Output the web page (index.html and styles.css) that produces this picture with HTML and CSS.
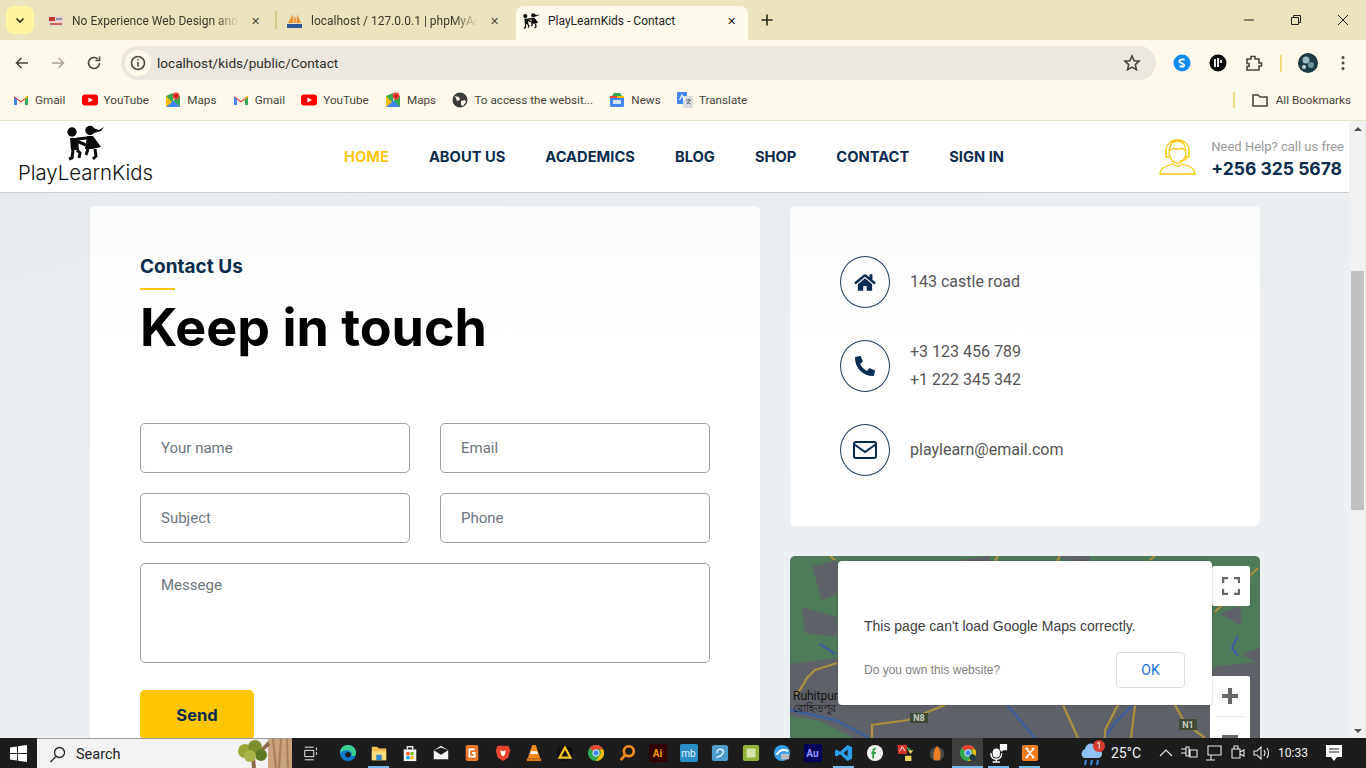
FILE: index.html
```html
<!DOCTYPE html>
<html lang="en">
<head>
    <meta charset="UTF-8">
    <title>PlayLearnKids - Contact</title>
    <link rel="stylesheet" href="styles.css">
</head>
<body>

<svg class="sprite" width="0" height="0">
    <symbol id="gmail" viewBox="0 0 16 16">
        <path d="M1 13V4l7 5 7-5v9h-3V7.500L8 10.500 4 7.500V13z" fill="#ea4335"/>
        <path d="M1 13h3V7.500L1 5z" fill="#4285f4"/>
        <path d="M12 13h3V5l-3 2.500z" fill="#34a853"/>
        <path d="M12 7.500L15 5V3.500L12 5.500z" fill="#fbbc04"/>
    </symbol>
    <symbol id="youtube" viewBox="0 0 16 16">
        <rect x="0" y="2.500" width="16" height="11" rx="3" fill="#f00"/>
        <path d="M6.400 5.500v5L11 8z" fill="#fff"/>
    </symbol>
    <symbol id="maps" viewBox="0 0 16 16">
        <path d="M1 4l7-3 7 3v11H1z" fill="#34a853"/>
        <path d="M1 15l7-7 7 7z" fill="#4285f4"/>
        <path d="M1 4l6 6-6 5z" fill="#fbbc04"/>
        <path d="M8 1l3 5-3 3z" fill="#e8eaed"/>
        <circle cx="11" cy="4" r="3.400" fill="#ea4335"/>
        <circle cx="11" cy="4" r="1.200" fill="#a50e0e"/>
    </symbol>
    <symbol id="kids" viewBox="0 0 38 36">
        <circle cx="5" cy="7" r="4.700" class="kid-fill"/>
        <circle cx="23" cy="5.500" r="4.700" class="kid-fill"/>
        <path d="M26 3l6 2 5-3-3 4-7 2z" class="kid-fill"/>
        <path d="M3 13h8l1 12H4z" class="kid-fill"/>
        <path d="M20 11h6l8 11-9 2-7 0z" class="kid-fill"/>
        <path d="M5 14l14 6M10 14l10-1" class="kid-line"/>
        <path d="M6 25l-1 8-3 1M10 25l3 3-1 5M21 24l-2 6M28 24l1 7-3 3" class="kid-line"/>
    </symbol>
</svg>

<div class="screen">

    <div class="tabstrip">
        <div class="tab-search">
            <svg width="12" height="12" viewBox="0 0 12 12"><path d="M2.500 4.500L6 8l3.500-3.500" class="ln-dark"/></svg>
        </div>
        <div class="tab tab-first">
            <svg class="favicon" viewBox="0 0 17 16">
                <rect x="1" y="3" width="15" height="10" fill="#e8d4cc"/>
                <rect x="2" y="4" width="6" height="4" fill="#c0392b"/>
                <rect x="9" y="5" width="6" height="2" fill="#8a8fb0"/>
                <rect x="3" y="10" width="12" height="2" fill="#c96a5c"/>
            </svg>
            <span class="tab-title fade">No Experience Web Design and</span>
            <span class="tab-close">&#10005;</span>
        </div>
        <div class="tab-sep"></div>
        <div class="tab tab-second">
            <svg class="favicon" viewBox="0 0 17 16">
                <path d="M2 10L7 1l2 5 2-5 4 9z" fill="#e8912d"/>
                <path d="M7 1l1 9M11 1l-1 9" stroke="#fff" stroke-width=".6"/>
                <rect x="1" y="11" width="15" height="4" fill="#2d5a96"/>
            </svg>
            <span class="tab-title fade">localhost / 127.0.0.1 | phpMyAd</span>
            <span class="tab-close">&#10005;</span>
        </div>
        <div class="tab tab-active">
            <svg class="favicon"><use href="#kids"/></svg>
            <span class="tab-title">PlayLearnKids - Contact</span>
            <span class="tab-close tab-close-on">&#10005;</span>
        </div>
        <svg class="new-tab" width="14" height="14" viewBox="0 0 14 14"><path d="M7 1.500v11M1.500 7h11" class="ln-dark"/></svg>
        <div class="window-btns">
            <svg width="12" height="12" viewBox="0 0 12 12"><path d="M1 6h10" class="ln-thin"/></svg>
            <svg width="12" height="12" viewBox="0 0 12 12"><path d="M1.500 3.500h7v7h-7zM3.500 3.500v-2h7v7h-2" class="ln-thin"/></svg>
            <svg width="12" height="12" viewBox="0 0 12 12"><path d="M1 1l10 10M11 1L1 11" class="ln-thin"/></svg>
        </div>
    </div>

    <div class="toolbar">
        <svg class="tool-icon" viewBox="0 0 16 16"><path d="M14 8H2.500M7.500 3L2.500 8l5 5" class="ln-tool"/></svg>
        <svg class="tool-icon tool-off" viewBox="0 0 16 16"><path d="M2 8h11.500M8.500 3l5 5-5 5" class="ln-tool"/></svg>
        <svg class="tool-icon" viewBox="0 0 16 16"><path d="M13.500 8A5.500 5.500 0 1 1 11.700 3.900M13.500 1.500v4h-4" class="ln-tool"/></svg>
        <div class="omnibox">
            <span class="site-info">
                <svg width="16" height="16" viewBox="0 0 16 16">
                    <circle cx="8" cy="8" r="6.500" class="ln-tool"/>
                    <path d="M8 7v4.500M8 4.200v1.400" class="ln-tool"/>
                </svg>
            </span>
            <span class="url">localhost/kids/public/Contact</span>
            <svg class="star" width="18" height="18" viewBox="0 0 18 18"><path d="M9 2l2.100 4.700 5 .5-3.800 3.400 1.100 5L9 13.100l-4.400 2.500 1.100-5L1.900 7.200l5-.5z" class="ln-tool"/></svg>
        </div>
        <div class="extensions">
            <svg width="18" height="18" viewBox="0 0 18 18">
                <circle cx="9" cy="9" r="8.500" fill="#0d8bf5"/>
                <path d="M11.500 5.500L8 5.500Q6 6 6.500 8L11 10.500Q11.500 12.500 10 12.500L6.500 12.500" fill="none" stroke="#fff" stroke-width="1.800"/>
            </svg>
            <svg width="18" height="18" viewBox="0 0 18 18">
                <circle cx="9" cy="9" r="8.500" fill="#0a0a0a"/>
                <path d="M6 5v8M9 4v9M12 6v3" stroke="#fff" stroke-width="1.800"/>
            </svg>
            <svg width="18" height="18" viewBox="0 0 18 18"><path d="M2 5h4V2.500h4V5h4v4h2.500v3H14v4H2v-3.500h2v-3H2z" class="ln-tool"/></svg>
            <span class="ext-sep"></span>
            <svg class="avatar" width="20" height="20" viewBox="0 0 20 20">
                <circle cx="10" cy="10" r="10" fill="#1e3a44"/>
                <circle cx="8" cy="7" r="3.500" fill="#9dbcc2"/>
                <circle cx="13" cy="12" r="3" fill="#6d949c"/>
                <circle cx="6" cy="14" r="2" fill="#c5d7d9"/>
            </svg>
            <svg width="4" height="16" viewBox="0 0 4 16"><g class="dot-fill"><circle cx="2" cy="2.500" r="1.500"/><circle cx="2" cy="8" r="1.500"/><circle cx="2" cy="13.500" r="1.500"/></g></svg>
        </div>
    </div>

    <div class="bookmarks">
        <a class="bm"><svg class="bm-ico"><use href="#gmail"/></svg>Gmail</a>
        <a class="bm"><svg class="bm-ico"><use href="#youtube"/></svg>YouTube</a>
        <a class="bm"><svg class="bm-ico"><use href="#maps"/></svg>Maps</a>
        <a class="bm"><svg class="bm-ico"><use href="#gmail"/></svg>Gmail</a>
        <a class="bm"><svg class="bm-ico"><use href="#youtube"/></svg>YouTube</a>
        <a class="bm"><svg class="bm-ico"><use href="#maps"/></svg>Maps</a>
        <a class="bm">
            <svg class="bm-ico" viewBox="0 0 16 16">
                <circle cx="8" cy="8" r="7.500" fill="#3c3c3c"/>
                <path d="M3 4l4 1 1 3-3 1zM9 9l4-1 1 2-3 4-2-1z" fill="#fff9ec"/>
            </svg>To access the websit...</a>
        <a class="bm">
            <svg class="bm-ico" viewBox="0 0 16 16">
                <rect x="1" y="4" width="14" height="11" rx="1.500" fill="#4285f4"/>
                <path d="M3 4l2-3h6l2 3z" fill="#34a853"/>
                <path d="M1 4h7v2H1z" fill="#ea4335"/>
                <path d="M8 4h7v2H8z" fill="#fbbc04"/>
                <rect x="4" y="8" width="8" height="4" fill="#d2e3fc"/>
            </svg>News</a>
        <a class="bm">
            <svg class="bm-ico" viewBox="0 0 16 16">
                <rect x="0" y="0" width="10" height="12" rx="1" fill="#4285f4"/>
                <rect x="6" y="4" width="10" height="12" rx="1" fill="#dadce0"/>
                <path d="M2.500 8l2.500-5 2.500 5" fill="none" stroke="#fff" stroke-width="1.200"/>
                <path d="M9 8h5M11.500 7v1M13 8q-1 3-3.500 4M10 9.500q1.500 2 3.500 2.500" fill="none" stroke="#5f6368"/>
            </svg>Translate</a>
        <span class="bm-sep"></span>
        <a class="bm bm-all">
            <svg class="bm-ico" viewBox="0 0 16 16"><path d="M1 3h5l2 2h7v9H1z" class="ln-tool"/></svg>All Bookmarks</a>
    </div>

    <div class="viewport">
        <div class="page">

            <header class="site-header">
                <a class="logo">
                    <svg width="38" height="36"><use href="#kids"/></svg>
                    <span class="logo-text">PlayLearnKids</span>
                </a>
                <nav class="main-nav">
                    <a class="active">HOME</a>
                    <a>ABOUT US</a>
                    <a>ACADEMICS</a>
                    <a>BLOG</a>
                    <a>SHOP</a>
                    <a>CONTACT</a>
                    <a>SIGN IN</a>
                </nav>
                <div class="help">
                    <svg width="37" height="36" viewBox="0 0 37 36">
                        <g class="ln-yellow">
                            <path d="M10 14c0-7 3-12 8.500-12S27 7 27 14c0 5-4 10-8.500 10S10 19 10 14z"/>
                            <path d="M10 12c3-3 6-3 8.500-1.500 3-1.500 6-1.500 8.500 1.500"/>
                            <path d="M7 16V12C7 5 12 1 18.500 1S30 5 30 12v4"/>
                            <path d="M7 12v6h3M30 12v6h-3M28 18c0 2-3 4-7 4"/>
                            <path d="M1 35c0-6 6-8 13-10 2 3 7 3 9 0 7 2 13 4 13 10z"/>
                        </g>
                    </svg>
                    <div class="help-text">
                        <span class="help-label">Need Help? call us free</span>
                        <strong class="help-phone">+256 325 5678</strong>
                    </div>
                </div>
            </header>

            <main class="content">
                <section class="card form-card">
                    <h4 class="eyebrow">Contact Us</h4>
                    <h1 class="title">Keep in touch</h1>
                    <form class="contact-form">
                        <input type="text" placeholder="Your name">
                        <input type="text" placeholder="Email">
                        <input type="text" placeholder="Subject">
                        <input type="text" placeholder="Phone">
                        <textarea class="wide" placeholder="Messege"></textarea>
                        <button type="button" class="send">Send</button>
                    </form>
                </section>

                <aside class="side">
                    <section class="card info-card">
                        <div class="info-row">
                            <span class="info-icon">
                                <svg width="22" height="19" viewBox="0 0 576 512"><path class="navy-fill" d="M280.37 148.26L96 300.11V464a16 16 0 0 0 16 16l112.06-.29a16 16 0 0 0 15.92-16V368a16 16 0 0 1 16-16h64a16 16 0 0 1 16 16v95.64a16 16 0 0 0 16 16.05L464 480a16 16 0 0 0 16-16V300L295.67 148.26a12.19 12.19 0 0 0-15.3 0zM571.6 251.47L488 182.56V44.05a12 12 0 0 0-12-12h-56a12 12 0 0 0-12 12v72.61L318.47 43a48 48 0 0 0-61 0L4.34 251.47a12 12 0 0 0-1.6 16.9l25.5 31A12 12 0 0 0 45.15 301l235.22-193.74a12.19 12.19 0 0 1 15.3 0L530.9 301a12 12 0 0 0 16.9-1.6l25.5-31a12 12 0 0 0-1.7-16.93z"/></svg>
                            </span>
                            <div class="info-text"><p>143 castle road</p></div>
                        </div>
                        <div class="info-row">
                            <span class="info-icon">
                                <svg width="20" height="20" viewBox="0 0 512 512"><path class="navy-fill" transform="translate(512 0) scale(-1 1)" d="M493.4 24.6l-104-24c-11.3-2.6-22.9 3.3-27.5 13.9l-48 112c-4.2 9.8-1.4 21.3 6.9 28l60.6 49.6c-36 76.7-98.9 140.5-177.2 177.2l-49.6-60.6c-6.8-8.3-18.2-11.1-28-6.9l-112 48C3.9 366.5-2 378.1.6 389.4l24 104C27.1 504.2 36.7 512 48 512c256.1 0 464-207.5 464-464 0-11.2-7.7-20.9-18.6-23.4z"/></svg>
                            </span>
                            <div class="info-text"><p>+3 123 456 789</p><p>+1 222 345 342</p></div>
                        </div>
                        <div class="info-row">
                            <span class="info-icon">
                                <svg width="24" height="18" viewBox="0 0 24 18"><rect x="1" y="1" width="22" height="16" rx="2" class="ln-navy"/><path d="M1.500 3.500L12 11l10.500-7.500" class="ln-navy"/></svg>
                            </span>
                            <div class="info-text"><p>playlearn@email.com</p></div>
                        </div>
                    </section>

                    <section class="map">
                        <svg class="map-art" width="470" height="400" viewBox="0 0 470 400">
                            <rect width="470" height="400" fill="#4f7a59"/>
                            <g fill="#5f6168">
                                <path d="M22 11L47 4v34L32 44z"/>
                                <path d="M12 51l35 10v20L15 77z"/>
                                <path d="M0 108l47-6 60 44h160l120-6 40-30 43-4v290H0z"/>
                                <path d="M452 98l18-6v18zM430 58l20-8 2 20z"/>
                                <path d="M170 4l30-4v10zM260 0h40v8z"/>
                            </g>
                            <path d="M0 160l30 5 34 17H0z" fill="#4f7a59"/>
                            <g class="map-river">
                                <path d="M0 154l45 10 33 17"/>
                                <path d="M217 149l28 33"/>
                                <path d="M342 150l-17 17-10 15"/>
                                <path d="M30 88l15 10M448 80l-6 12 6 8"/>
                            </g>
                            <g class="map-road">
                                <path d="M47 107L25 114l-8 8-7 12-5 4"/>
                                <path d="M82 182v-13l36-5 37-15"/>
                                <path d="M273 149l15 33"/>
                                <path d="M328 149l-13 25v8"/>
                                <path d="M345 150l-4 32"/>
                                <path d="M385 149l10 18 20 15"/>
                                <path d="M468 12l-14 13M437 44l-12 12"/>
                                <path d="M45 4L40 0M208 0l-3 5M270 0l-3 5M360 4l5-4"/>
                            </g>
                            <rect x="120" y="157" width="18" height="10" fill="#3d4a36"/>
                            <rect x="389" y="163" width="18" height="11" fill="#3d4a36"/>
                            <text x="129" y="165" class="shield">N8</text>
                            <text x="398" y="172" class="shield">N1</text>
                            <text x="3" y="144" class="place">Ruhitpur</text>
                            <text x="3" y="156" class="place place-bn">রোহিতপুর</text>
                        </svg>
                        <button type="button" class="map-btn full-btn">
                            <svg width="18" height="18" viewBox="0 0 18 18"><path d="M1 6V1h5M12 1h5v5M17 12v5h-5M6 17H1v-5" class="ln-map"/></svg>
                        </button>
                        <div class="map-btn zoom-btns">
                            <svg width="18" height="18" viewBox="0 0 18 18"><path d="M9 1v16M1 9h16" class="ln-map-thick"/></svg>
                            <span class="zoom-line"></span>
                            <svg width="18" height="18" viewBox="0 0 18 18"><path d="M1 9h16" class="ln-map-thick"/></svg>
                        </div>
                        <div class="map-dialog">
                            <p class="map-msg">This page can't load Google Maps correctly.</p>
                            <div class="map-foot">
                                <a class="map-own">Do you own this website?</a>
                                <button type="button" class="map-ok">OK</button>
                            </div>
                        </div>
                    </section>
                </aside>
            </main>
        </div>

        <div class="scrollbar">
            <span class="arrow arrow-up"></span>
            <span class="thumb"></span>
            <span class="arrow arrow-down"></span>
        </div>
    </div>

    <footer class="taskbar">
        <div class="start">
            <svg width="17" height="17" viewBox="0 0 17 17"><path d="M0 2.400l7-1v6.600H0zM8 1.300l9-1.300v8H8zM0 9h7v6.600l-7-1zM8 9h9v8l-9-1.300z" fill="#fff"/></svg>
        </div>
        <div class="searchbox">
            <svg width="17" height="17" viewBox="0 0 17 17"><circle cx="10.500" cy="6.500" r="5" class="ln-search"/><path d="M7 10.500L1.500 16" class="ln-search"/></svg>
            <span>Search</span>
            <svg class="tree" width="57" height="30" viewBox="0 0 57 30">
                <rect x="33" y="0" width="24" height="30" fill="#c9a27e"/>
                <path d="M38 0l3 30M46 0l-2 30M52 0l1 30" stroke="#a97f5a" stroke-width="2"/>
                <path d="M33 2L22 14l3 1 10-9zM16 18l1 12h4l-1-12z" fill="#8a6a48"/>
                <circle cx="10" cy="12" r="7" fill="#9aa83a"/>
                <circle cx="20" cy="8" r="7" fill="#7c8f2c"/>
                <circle cx="26" cy="16" r="6" fill="#5f7a24"/>
                <circle cx="15" cy="17" r="6" fill="#a8b548"/>
            </svg>
        </div>
        <div class="task-apps">
            <span class="app app-view">
                <svg width="17" height="17" viewBox="0 0 17 17"><path d="M1 5h10v7H1zM1 1.500h10M1 15.500h10M14 2v3M14 7v3" stroke="#fff" fill="none"/></svg>
            </span>
            <span class="app">
                <svg width="20" height="20" viewBox="0 0 20 20"><circle cx="10" cy="10" r="9" fill="#0f7cc9"/><path d="M1 10a9 9 0 0 1 18 0c0 3-3 4-5 3 1-4-2-6-5-6-4 0-7 2-8 3z" fill="#3fcf8e"/><circle cx="10" cy="12" r="3" fill="#1b1b1b"/></svg>
            </span>
            <span class="app app-running">
                <svg width="20" height="20" viewBox="0 0 20 20"><path d="M2 3h6l2 2h8v13H2z" fill="#f2c14e"/><path d="M2 8h16v10H2z" fill="#fadb7d"/><rect x="7" y="12" width="6" height="6" fill="#2f88d0"/></svg>
            </span>
            <span class="app">
                <svg width="20" height="20" viewBox="0 0 20 20"><path d="M3 6h14v13H3z" fill="#f2f2f2"/><path d="M7 6V3h6v3" fill="none" stroke="#f2f2f2" stroke-width="1.500"/><rect x="6" y="9" width="3.500" height="3.500" fill="#f25022"/><rect x="10.500" y="9" width="3.500" height="3.500" fill="#7fba00"/><rect x="6" y="13.500" width="3.500" height="3.500" fill="#00a4ef"/><rect x="10.500" y="13.500" width="3.500" height="3.500" fill="#ffb900"/></svg>
            </span>
            <span class="app">
                <svg width="20" height="20" viewBox="0 0 20 20"><path d="M2 7l8-5 8 5v10H2z" fill="#f4f4f4"/><path d="M2 7l8 5 8-5-8-3z" fill="#1a1a1a"/></svg>
            </span>
            <span class="app">
                <svg width="20" height="20" viewBox="0 0 20 20"><rect x="3" y="1" width="14" height="18" rx="2" fill="#e9762b"/><path d="M13 6H7v8h6v-4h-3" fill="none" stroke="#fff" stroke-width="2"/></svg>
            </span>
            <span class="app">
                <svg width="20" height="20" viewBox="0 0 20 20"><path d="M4 2h12l2 5-2 8-6 4-6-4-2-8z" fill="#e8452c"/><path d="M7 7l3 1 3-1-1 5-2 2-2-2z" fill="#fff"/></svg>
            </span>
            <span class="app">
                <svg width="20" height="20" viewBox="0 0 20 20"><path d="M8 1h4l5 15H3z" fill="#f08a1d"/><path d="M6.500 8h7l.8 3H5.700z" fill="#fff"/><rect x="2" y="16" width="16" height="3" fill="#d9761a"/></svg>
            </span>
            <span class="app">
                <svg width="20" height="20" viewBox="0 0 20 20"><circle cx="10" cy="10" r="9" fill="#111"/><path d="M10 4l6 11H4z" fill="none" stroke="#f3c221" stroke-width="2.500"/></svg>
            </span>
            <span class="app">
                <svg width="20" height="20" viewBox="0 0 20 20"><circle cx="10" cy="10" r="9" fill="#34a853"/><path d="M10 1a9 9 0 0 1 8 5H10a4 4 0 0 0-3.500 2L3 4a9 9 0 0 1 7-3z" fill="#ea4335"/><path d="M18 6a9 9 0 0 1-8 13l3.500-6a4 4 0 0 0 0-7z" fill="#fbbc04"/><circle cx="10" cy="10" r="3.500" fill="#4285f4" stroke="#fff"/></svg>
            </span>
            <span class="app">
                <svg width="20" height="20" viewBox="0 0 20 20"><circle cx="12" cy="8" r="5.500" fill="none" stroke="#f08a1d" stroke-width="3"/><path d="M8 12l-5 6" stroke="#f08a1d" stroke-width="3"/></svg>
            </span>
            <span class="app">
                <span class="app-tile tile-ai">Ai</span>
            </span>
            <span class="app">
                <span class="app-tile tile-mb">mb</span>
            </span>
            <span class="app">
                <svg width="20" height="20" viewBox="0 0 20 20"><rect x="1" y="1" width="18" height="18" rx="3" fill="#4c9ccd"/><path d="M6 15q6-1 8-6-1-4-5-3-3 1-2 4" fill="none" stroke="#e8f3fa" stroke-width="1.500"/></svg>
            </span>
            <span class="app">
                <svg width="20" height="20" viewBox="0 0 20 20"><rect x="1" y="1" width="18" height="18" rx="2" fill="#8fb339"/><rect x="5" y="5" width="10" height="10" fill="#d6e4a8"/></svg>
            </span>
            <span class="app">
                <svg width="20" height="20" viewBox="0 0 20 20"><circle cx="10" cy="10" r="9" fill="#3aa0e8"/><path d="M4 12q5-8 13-4" fill="none" stroke="#fff" stroke-width="2"/><rect x="9" y="11" width="9" height="6" fill="#bdbdbd"/></svg>
            </span>
            <span class="app">
                <span class="app-tile tile-au">Au</span>
            </span>
            <span class="app app-running">
                <svg width="20" height="20" viewBox="0 0 20 20"><path d="M14 1l5 2.500v13L14 19 5.500 11.500 2 14l-2-1V7l2-1 3.500 2.500zM14 6l-4.500 4 4.500 4z" fill="#2b9fe6"/></svg>
            </span>
            <span class="app">
                <svg width="20" height="20" viewBox="0 0 20 20"><circle cx="10" cy="10" r="9" fill="#f2f2f2"/><path d="M11 5q-3 0-3 3v8M6 10h5" fill="none" stroke="#2f9e44" stroke-width="2"/></svg>
            </span>
            <span class="app">
                <svg width="20" height="20" viewBox="0 0 20 20"><rect x="1" y="1" width="10" height="10" fill="#d9342b"/><path d="M3 8l3-5 3 5" fill="none" stroke="#fff"/><path d="M12 7h6l-3 4zM9 13h7v6H9z" fill="#f4d35e"/><path d="M11 4l4 3" stroke="#3aa655" stroke-width="2"/></svg>
            </span>
            <span class="app">
                <svg width="20" height="20" viewBox="0 0 20 20"><circle cx="10" cy="11" r="8" fill="#4a4a4a"/><path d="M10 2q6 6 3 16H7Q4 10 10 2z" fill="#ee7f22"/></svg>
            </span>
            <span class="app app-active">
                <svg width="20" height="20" viewBox="0 0 20 20"><circle cx="10" cy="10" r="9" fill="#34a853"/><path d="M10 1a9 9 0 0 1 8 5H10a4 4 0 0 0-3.500 2L3 4a9 9 0 0 1 7-3z" fill="#ea4335"/><path d="M18 6a9 9 0 0 1-8 13l3.500-6a4 4 0 0 0 0-7z" fill="#fbbc04"/><circle cx="10" cy="10" r="3.500" fill="#4285f4" stroke="#fff"/><circle cx="15" cy="15" r="3.500" fill="#1e3a44"/></svg>
            </span>
            <span class="app app-running">
                <svg width="20" height="22" viewBox="0 0 20 22"><rect x="3" y="6" width="8" height="10" rx="4" fill="#fff"/><path d="M1 11q0 7 6 7t6-7M7 18v3M3 21h8" fill="none" stroke="#fff" stroke-width="1.500"/><path d="M11 1h8v7h-4l-3 2V8h-1z" fill="#fff"/></svg>
            </span>
            <span class="app app-running">
                <svg width="20" height="20" viewBox="0 0 20 20"><rect x="1" y="1" width="18" height="18" rx="2" fill="#f07e21"/><path d="M6 5l8 10M14 5L6 15M5 5h3M12 5h3M5 15h3M12 15h3" stroke="#fff" stroke-width="1.800"/></svg>
            </span>
        </div>
        <div class="tray">
            <span class="weather">
                <svg width="28" height="26" viewBox="0 0 28 26">
                    <path d="M6 18a5 5 0 0 1 1-9 6 6 0 0 1 12 1 4 4 0 0 1 2 8z" fill="#8fc1f2"/>
                    <path d="M8 20l-1 5M14 20l-1 5M20 20l-1 5" stroke="#3d8fe0" stroke-width="2"/>
                    <circle cx="21" cy="6" r="6" fill="#d93a30"/>
                    <text x="21" y="9" class="badge-num">1</text>
                </svg>
                <span>25°C</span>
            </span>
            <svg class="tray-chev" width="14" height="8" viewBox="0 0 14 8"><path d="M1 7l6-6 6 6" class="ln-tray"/></svg>
            <svg width="18" height="16" viewBox="0 0 18 16"><path d="M1 4h5M1 8h5M6 2h3v9H6zM10 5h7v7h-7z" class="ln-tray"/></svg>
            <svg width="18" height="18" viewBox="0 0 18 18"><path d="M3 2h13v9H3zM1 16h9M6 11v5" class="ln-tray"/></svg>
            <svg width="16" height="18" viewBox="0 0 16 18"><path d="M2 5h8v9H2zM4 5V2h4v3M10 8l4-2v6l-4-2" class="ln-tray"/></svg>
            <svg width="18" height="16" viewBox="0 0 18 16"><path d="M1 6h3l4-4v12l-4-4H1zM11 5q2 3 0 6M14 3q3 5 0 10" class="ln-tray"/></svg>
            <span class="clock">10:33</span>
            <svg class="notify" width="18" height="18" viewBox="0 0 18 18"><path d="M1 1h16v12h-5l-3 4-3-4H1z" fill="#fff"/><path d="M4 5h10M4 8h10" stroke="#1c1c1c"/></svg>
        </div>
    </footer>
</div>

</body>
</html>
```

FILE: styles.css
```css
* {
    margin: 0;
    padding: 0;
    box-sizing: border-box;
}

body {
    font-family: "Roboto", "Liberation Sans", sans-serif;
    background: #1c1c1c;
}

a {
    text-decoration: none;
    color: inherit;
}

.sprite {
    display: block;
    height: 0;
}

.screen {
    width: 1366px;
    height: 768px;
    display: flex;
    flex-direction: column;
    overflow: hidden;
}

/* svg line styles */
.ln-dark { fill: none; stroke: #2b2b20; stroke-width: 1.6; }
.ln-thin { fill: none; stroke: #222; stroke-width: 1; }
.ln-tool { fill: none; stroke: #47453c; stroke-width: 1.6; }
.ln-yellow { fill: none; stroke: #fcc60d; stroke-width: 1.3; }
.ln-navy { fill: none; stroke: #062c52; stroke-width: 2; }
.ln-map { fill: none; stroke: #666; stroke-width: 2.4; }
.ln-map-thick { fill: none; stroke: #666; stroke-width: 4; }
.ln-search { fill: none; stroke: #222; stroke-width: 1.3; }
.ln-tray { fill: none; stroke: #e8e8e8; stroke-width: 1.1; }
.kid-fill { fill: #0b0b0b; }
.kid-line { fill: none; stroke: #0b0b0b; stroke-width: 3; }
.navy-fill { fill: #062c52; }
.dot-fill { fill: #47453c; }

/* tab strip */
.tabstrip {
    height: 40px;
    background: #ebe3bd;
    display: flex;
    align-items: flex-end;
    font-size: 12px;
    color: #3a382c;
}

.tab-search {
    width: 28px;
    height: 28px;
    margin: 0 4px 6px 6px;
    border-radius: 8px;
    background: #fdf59c;
    display: flex;
    align-items: center;
    justify-content: center;
}

.tab {
    height: 34px;
    padding-bottom: 4px;
    display: flex;
    align-items: center;
    flex: none;
}

.tab-first {
    width: 237px;
    padding-left: 9px;
}

.tab-second {
    width: 239px;
    padding-left: 9px;
}

.tab-sep {
    width: 2px;
    height: 18px;
    background: #d2c78a;
    margin-bottom: 11px;
    flex: none;
}

.tab-active {
    width: 232px;
    padding-left: 7px;
    background: #fff9ec;
    border-radius: 8px 8px 0 0;
    color: #222;
}

.favicon {
    width: 17px;
    height: 16px;
    flex: none;
    margin-right: 8px;
}

.tab-title {
    width: 167px;
    white-space: nowrap;
    flex: none;
}

.fade {
    -webkit-mask-image: linear-gradient(90deg, #000 85%, transparent);
    mask-image: linear-gradient(90deg, #000 85%, transparent);
}

.tab-close {
    margin-left: 12px;
    font-size: 11px;
    color: #4d4b3c;
}

.tab-close-on {
    color: #222;
    margin-left: 12px;
}

.new-tab {
    margin: 0 0 13px 12px;
}

.window-btns {
    margin-left: auto;
    align-self: center;
    display: flex;
    gap: 35px;
    padding-right: 17px;
}

/* toolbar */
.toolbar {
    height: 46px;
    background: #fff9ec;
    display: flex;
    align-items: center;
    padding-left: 14px;
}

.tool-icon {
    width: 16px;
    height: 16px;
    margin-right: 20px;
    flex: none;
}

.tool-off {
    opacity: 0.45;
}

.omnibox {
    width: 1035px;
    height: 34px;
    margin-left: -1px;
    border-radius: 17px;
    background: #ece8e0;
    display: flex;
    align-items: center;
    padding-left: 4px;
}

.site-info {
    width: 26px;
    height: 26px;
    border-radius: 50%;
    background: #fff9ec;
    display: flex;
    align-items: center;
    justify-content: center;
}

.url {
    margin-left: 6px;
    font-size: 13.6px;
    color: #2f2e28;
}

.star {
    margin-left: auto;
    margin-right: 15px;
}

.extensions {
    display: flex;
    align-items: center;
    margin-left: 17px;
    gap: 18px;
}

.ext-sep {
    width: 2px;
    height: 17px;
    background: #f0dc82;
    margin: 0 -2px 0 -1px;
}

.avatar {
    margin-right: 5px;
}

/* bookmarks */
.bookmarks {
    height: 35px;
    padding: 0 0 7px 13px;
    background: #fff9ec;
    border-bottom: 1px solid #ebe3bd;
    display: flex;
    align-items: center;
    gap: 16.3px;
    font-size: 11.7px;
    color: #45433a;
}

.bm {
    display: flex;
    align-items: center;
    gap: 6px;
    white-space: nowrap;
}

.bm-ico {
    width: 16px;
    height: 16px;
    flex: none;
}

.bm-sep {
    width: 2px;
    height: 16px;
    background: #f0dc82;
    margin-left: auto;
}

.bm-all {
    gap: 8px;
    padding-right: 15px;
}

/* page */
.viewport {
    flex: 1;
    min-height: 0;
    display: flex;
}

.page {
    flex: 1;
    overflow: hidden;
    background: #e9edf0;
    background-image: linear-gradient(165deg, #e6eaed, #ecf0f3 60%);
}

.scrollbar {
    width: 17px;
    background: #f1f1f1;
    display: flex;
    flex-direction: column;
    align-items: center;
    padding: 6px 0 5px;
}

.thumb {
    width: 13px;
    height: 239px;
    margin-top: 140px;
    background: #c1c1c1;
}

.arrow {
    width: 0;
    height: 0;
    border-left: 4px solid transparent;
    border-right: 4px solid transparent;
}

.arrow-up {
    border-bottom: 4px solid #505050;
}

.arrow-down {
    margin-top: auto;
    border-top: 4px solid #505050;
}

/* site header */
.site-header {
    height: 72px;
    background: #fff;
    border-bottom: 1px solid #ccc;
    display: flex;
    align-items: center;
    padding-left: 18px;
}

.logo {
    width: 135px;
    display: flex;
    flex-direction: column;
    align-items: center;
    align-self: flex-start;
    padding-top: 4px;
}

.logo-text {
    font-family: "Inter", "Liberation Sans", sans-serif;
    font-size: 20.4px;
    font-weight: 300;
    line-height: 24px;
    color: #111;
    white-space: nowrap;
}

.main-nav {
    display: flex;
    gap: 40px;
    margin-left: 191px;
    font-family: "Inter", "Liberation Sans", sans-serif;
    font-size: 14.7px;
    font-weight: 700;
    color: #0b2c4d;
}

.main-nav .active {
    color: #fcc60d;
}

.help {
    margin-left: auto;
    display: flex;
    align-items: center;
    gap: 15px;
    padding-right: 5px;
}

.help-text {
    display: flex;
    flex-direction: column;
    padding-top: 4px;
}

.help-label {
    font-size: 13px;
    line-height: 20px;
    color: #999;
    white-space: nowrap;
}

.help-phone {
    font-family: "Inter", "Liberation Sans", sans-serif;
    font-size: 17.5px;
    font-weight: 700;
    line-height: 24px;
    color: #0b2c4d;
    white-space: nowrap;
}

/* content */
.content {
    display: flex;
    align-items: flex-start;
    gap: 30px;
    padding: 13px 0 0 90px;
}

.card {
    background: linear-gradient(#fafbfb, #fff 130px);
    border-radius: 5px;
    padding: 50px;
}

.form-card {
    width: 670px;
    height: 760px;
}

.eyebrow {
    font-family: "Inter", "Liberation Sans", sans-serif;
    font-size: 19px;
    font-weight: 700;
    line-height: 20px;
    padding-top: 1px;
    color: #0b2c4d;
}

.eyebrow::after {
    content: "";
    display: block;
    width: 35px;
    height: 2px;
    margin-top: 11px;
    background: #fcc60d;
}

.title {
    font-family: "Inter", "Liberation Sans", sans-serif;
    font-size: 52px;
    font-weight: 700;
    line-height: 60px;
    margin-top: 8px;
    color: #000;
}

.contact-form {
    display: grid;
    grid-template-columns: 270px 270px;
    gap: 20px 30px;
    margin-top: 65px;
}

.contact-form input,
.contact-form textarea {
    height: 50px;
    border: 1px solid #a0a0a0;
    border-radius: 5px;
    padding: 0 20px;
    font-family: "Roboto", "Liberation Sans", sans-serif;
    font-size: 15px;
    background: #fff;
    outline: none;
    resize: none;
}

.contact-form .wide {
    grid-column: 1 / span 2;
    height: 100px;
    padding-top: 12px;
}

.contact-form ::placeholder {
    color: #6c757d;
    opacity: 1;
}

.send {
    width: 114px;
    height: 50px;
    margin-top: 7px;
    border: 0;
    border-radius: 5px;
    background: #fec601;
    font-family: "Inter", "Liberation Sans", sans-serif;
    font-size: 16.5px;
    font-weight: 700;
    color: #0b2c4d;
}

/* right column */
.side {
    width: 470px;
    display: flex;
    flex-direction: column;
    gap: 30px;
}

.info-card {
    display: flex;
    flex-direction: column;
    gap: 32px;
}

.info-row {
    height: 52px;
    display: flex;
    align-items: center;
    gap: 20px;
}

.info-icon {
    width: 50px;
    height: 52px;
    flex: none;
    border: 1px solid #1d3e5e;
    border-radius: 50%;
    display: flex;
    align-items: center;
    justify-content: center;
}

.info-text {
    font-size: 16px;
    line-height: 28px;
    padding-bottom: 1px;
    color: #555;
}

.map {
    position: relative;
    height: 400px;
    border-radius: 5px;
    overflow: hidden;
}

.map-art {
    display: block;
}

.map-river {
    fill: none;
    stroke: #3c5f9c;
    stroke-width: 2.4;
}

.map-road {
    fill: none;
    stroke: #ad9040;
    stroke-width: 2.2;
}

.shield {
    font-family: "Roboto", sans-serif;
    font-size: 9px;
    font-weight: 700;
    fill: #c8ccc0;
    text-anchor: middle;
}

.place {
    font-family: "Roboto", "Noto Sans", sans-serif;
    font-size: 12px;
    fill: #111;
}

.place-bn {
    font-size: 11px;
}

.map-btn {
    position: absolute;
    background: #fff;
    border: 0;
    border-radius: 2px;
}

.full-btn {
    top: 10px;
    left: 422px;
    width: 38px;
    height: 40px;
    display: flex;
    align-items: center;
    justify-content: center;
}

.zoom-btns {
    top: 120px;
    left: 420px;
    width: 40px;
    height: 81px;
    display: flex;
    flex-direction: column;
    align-items: center;
    padding-top: 11px;
}

.zoom-line {
    width: 30px;
    height: 1px;
    margin: 11px 0;
    background: #e6e6e6;
}

.map-dialog {
    position: absolute;
    top: 5px;
    left: 48px;
    width: 374px;
    height: 144px;
    padding: 55px 27px 0 26px;
    background: #fff;
    border-radius: 4px;
    font-family: "Liberation Sans", Arial, sans-serif;
    box-shadow: 0 0 2px rgba(0, 0, 0, 0.3);
}

.map-msg {
    font-size: 14px;
    line-height: 20px;
    color: #3c4043;
}

.map-foot {
    display: flex;
    align-items: center;
    justify-content: space-between;
    margin-top: 16px;
}

.map-own {
    font-size: 12px;
    color: #808080;
}

.map-ok {
    width: 69px;
    height: 36px;
    border: 1px solid #dadce0;
    border-radius: 4px;
    background: #fff;
    font-family: "Roboto", sans-serif;
    font-size: 14px;
    color: #1a73e8;
}

/* taskbar */
.taskbar {
    height: 30px;
    flex: none;
    background: #1c1c1c;
    display: flex;
    align-items: center;
    color: #f2f2f2;
}

.start {
    width: 37px;
    display: flex;
    justify-content: center;
}

.searchbox {
    width: 255px;
    height: 30px;
    background: #f2f2f2;
    border-top: 1px solid #9a9a9a;
    display: flex;
    align-items: center;
    padding: 1px 0 0 12px;
    gap: 10px;
    font-size: 14.5px;
    color: #222;
}

.tree {
    margin-left: auto;
}

.task-apps {
    display: flex;
    padding-left: 4px;
}

.app {
    width: 31px;
    height: 30px;
    display: flex;
    align-items: center;
    justify-content: center;
}

.app-view {
    margin-right: 5px;
}

.app svg {
    transform: scale(0.9);
}

.app-running {
    background: linear-gradient(#76b9ed, #76b9ed) center bottom / 21px 2px no-repeat;
}

.app-active {
    background: linear-gradient(#76b9ed, #76b9ed) center bottom / 100% 2px no-repeat, #3f3f3f;
}

.app-tile {
    width: 18px;
    height: 18px;
    display: flex;
    align-items: center;
    justify-content: center;
    border-radius: 2px;
    font-size: 10px;
    font-weight: 700;
}

.tile-ai {
    background: #330000;
    color: #ff9a00;
}

.tile-mb {
    background: #2a8dc5;
    color: #e8f4fb;
    font-weight: 400;
}

.tile-au {
    background: #00005b;
    color: #9999ff;
}

.tray {
    display: flex;
    align-items: center;
    margin-left: 33px;
    gap: 7px;
}

.weather {
    display: flex;
    align-items: center;
    gap: 5px;
    font-size: 14px;
    margin-right: 11px;
}

.badge-num {
    font-family: "Roboto", sans-serif;
    font-size: 9px;
    fill: #fff;
    text-anchor: middle;
}

.clock {
    margin-left: 0;
    font-size: 12px;
}

.notify {
    margin-left: 10px;
}
```
